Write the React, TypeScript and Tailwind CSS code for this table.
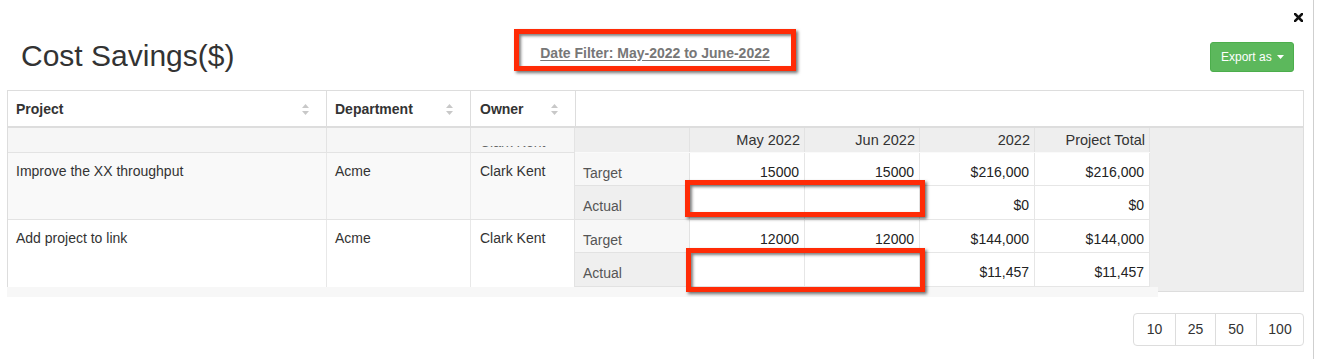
import React from "react";

const SortIcon = () => (
  <svg width="7" height="11" viewBox="0 0 7 11" className="shrink-0">
    <path d="M3.5 0L7 4H0z" fill="#c8c8c8" />
    <path d="M3.5 11L0 7h7z" fill="#c8c8c8" />
  </svg>
);

type PRow = { label: string; may: string; jun: string; yr: string; total: string };

const pivotRows: PRow[] = [
  { label: "Target", may: "15000", jun: "15000", yr: "$216,000", total: "$216,000" },
  { label: "Actual", may: "", jun: "", yr: "$0", total: "$0" },
  { label: "Target", may: "12000", jun: "12000", yr: "$144,000", total: "$144,000" },
  { label: "Actual", may: "", jun: "", yr: "$11,457", total: "$11,457" },
];

const projects = [
  { name: "Improve the XX throughput", dept: "Acme", owner: "Clark Kent", bg: "bg-[#f9f9f9]" },
  { name: "Add project to link", dept: "Acme", owner: "Clark Kent", bg: "bg-white" },
];

const redBox =
  "border-[5px] border-[#ff2b06] shadow-[2px_2px_3px_rgba(0,0,0,0.55),inset_2px_2px_3px_rgba(0,0,0,0.5)]";

export default function App() {
  return (
    <div className="relative w-[1317px] h-[359px] bg-white overflow-hidden font-['Liberation_Sans',Arial,sans-serif] text-[#333]">
      <div className="w-[1314px] h-full border-r border-[#cfcfcf]">
        {/* close */}
        <div className="h-[24px] flex justify-end pr-[10px] pt-[13px]">
          <svg width="9" height="9" viewBox="0 0 9 9">
            <path d="M1 1L8 8M8 1L1 8" stroke="#111" strokeWidth="2.6" strokeLinecap="square" />
          </svg>
        </div>

        {/* title row */}
        <div className="h-[66px] flex items-start">
          <div className="w-[514px] pl-[21px] pt-[15px]">
            <h1 className="text-[30px] leading-[34px] font-normal text-[#333]">Cost Savings($)</h1>
          </div>
          <div className={`mt-[5px] w-[282px] h-[42px] flex items-center justify-center pt-[5px] ${redBox}`}>
            <span className="text-[14px] leading-[16px] font-bold text-[#777] underline underline-offset-[2px]">
              Date Filter: May-2022 to June-2022
            </span>
          </div>
          <div className="ml-auto mr-[19px] mt-[18px]">
            <button className="w-[84px] h-[30px] bg-[#5cb85c] border border-[#4cae4c] rounded-[3px] text-white text-[12px] flex items-center pl-[10px] gap-[5px]">
              <span>Export as</span>
              <svg width="7" height="4" viewBox="0 0 7 4">
                <path d="M0 0h7L3.5 4z" fill="#fff" />
              </svg>
            </button>
          </div>
        </div>

        {/* table */}
        <div className="ml-[7px] w-[1297px] text-[14px] leading-[16px]">
          {/* header row */}
          <div className="flex h-[38px] border-t border-l border-r border-b-2 border-[#ddd] bg-white">
            <div className="w-[319px] border-r border-[#ddd] flex items-center justify-between pl-[8px] pr-[17px] pt-[1px]">
              <span className="font-bold">Project</span>
              <SortIcon />
            </div>
            <div className="w-[144px] border-r border-[#ddd] flex items-center justify-between pl-[8px] pr-[17px] pt-[1px]">
              <span className="font-bold">Department</span>
              <SortIcon />
            </div>
            <div className="w-[105px] border-r border-[#ddd] flex items-center justify-between pl-[9px] pr-[17px] pt-[1px]">
              <span className="font-bold">Owner</span>
              <SortIcon />
            </div>
            <div className="flex-1" />
          </div>

          {/* body */}
          <div className="flex items-start">
            {/* left columns */}
            <div className="w-[568px] border-l border-[#ddd]">
              <div className="flex h-[25px] bg-[#f6f6f6] border-b border-[#e3e3e3]">
                <div className="w-[319px] border-r border-[#e3e3e3]" />
                <div className="w-[144px] border-r border-[#e3e3e3]" />
                <div className="w-[104px] border-r border-[#e3e3e3] flex flex-col justify-end pl-[9px] overflow-hidden">
                  <div className="h-[4px] overflow-hidden">
                    <div className="-mt-[12px] text-[14px] leading-[16px] text-[#666]">Clark Kent</div>
                  </div>
                  <div className="h-[2px]" />
                </div>
              </div>
              {projects.map((p, i) => (
                <div
                  key={i}
                  className={`flex h-[67px] ${p.bg} ${i === 0 ? "border-b border-[#e3e3e3]" : ""}`}
                >
                  <div className="w-[319px] border-r border-[#e8e8e8] pl-[8px] pt-[10px]">{p.name}</div>
                  <div className="w-[144px] border-r border-[#e8e8e8] pl-[8px] pt-[10px]">{p.dept}</div>
                  <div className="w-[104px] border-r border-[#e3e3e3] pl-[9px] pt-[10px]">{p.owner}</div>
                </div>
              ))}
            </div>

            {/* pivot region */}
            <div className="flex-1 h-[164px] bg-[#eeeeee] border-r border-b border-[#ddd]">
              <div className="w-[575px]">
                <div className="flex h-[25px] bg-[#eeeeee] border-b border-[#fafafa] text-[14.5px]">
                  <div className="w-[115px] border-r border-[#e2e2e2]" />
                  {["May 2022", "Jun 2022", "2022", "Project Total"].map((h) => (
                    <div key={h} className="w-[115px] border-r border-[#e2e2e2] flex items-center justify-end pr-[4px]">
                      {h}
                    </div>
                  ))}
                </div>
                {pivotRows.map((r, i) => (
                  <div key={i} className={`flex ${i % 2 === 0 ? "h-[33px]" : "h-[34px]"}`}>
                    <div
                      className={`w-[115px] border-r border-b border-[#e2e2e2] pl-[8px] pt-[12px] text-[#555] ${
                        r.label === "Target" ? "bg-[#f7f7f7]" : "bg-[#efefef]"
                      }`}
                    >
                      {r.label}
                    </div>
                    {[r.may, r.jun, r.yr, r.total].map((v, j) => (
                      <div
                        key={j}
                        className="w-[115px] bg-white border-r border-b border-[#e6e6e6] text-right pr-[5px] pt-[11px] text-[#222]"
                      >
                        {v}
                      </div>
                    ))}
                  </div>
                ))}
              </div>
            </div>
          </div>

          {/* scroll strip */}
          <div className="relative -mt-[5px] h-[10px] w-[1151px] bg-[#f7f7f7]" />
        </div>

        {/* pagination */}
        <div className="flex justify-end pr-[9px] mt-[16px]">
          <div className="flex h-[33px] border border-[#ddd] rounded-[4px] text-[14px] text-[#333]">
            {[
              { t: "10", w: "w-[41px]" },
              { t: "25", w: "w-[40px]" },
              { t: "50", w: "w-[41px]" },
              { t: "100", w: "w-[47px]" },
            ].map((b, i) => (
              <div
                key={b.t}
                className={`${b.w} flex items-center justify-center ${i > 0 ? "border-l border-[#ddd]" : ""}`}
              >
                {b.t}
              </div>
            ))}
          </div>
        </div>
      </div>

      {/* annotation boxes */}
      <div className={`absolute left-[685px] top-[180px] w-[240px] h-[37px] ${redBox}`} />
      <div className={`absolute left-[686px] top-[248px] w-[239px] h-[44px] ${redBox}`} />
    </div>
  );
}
